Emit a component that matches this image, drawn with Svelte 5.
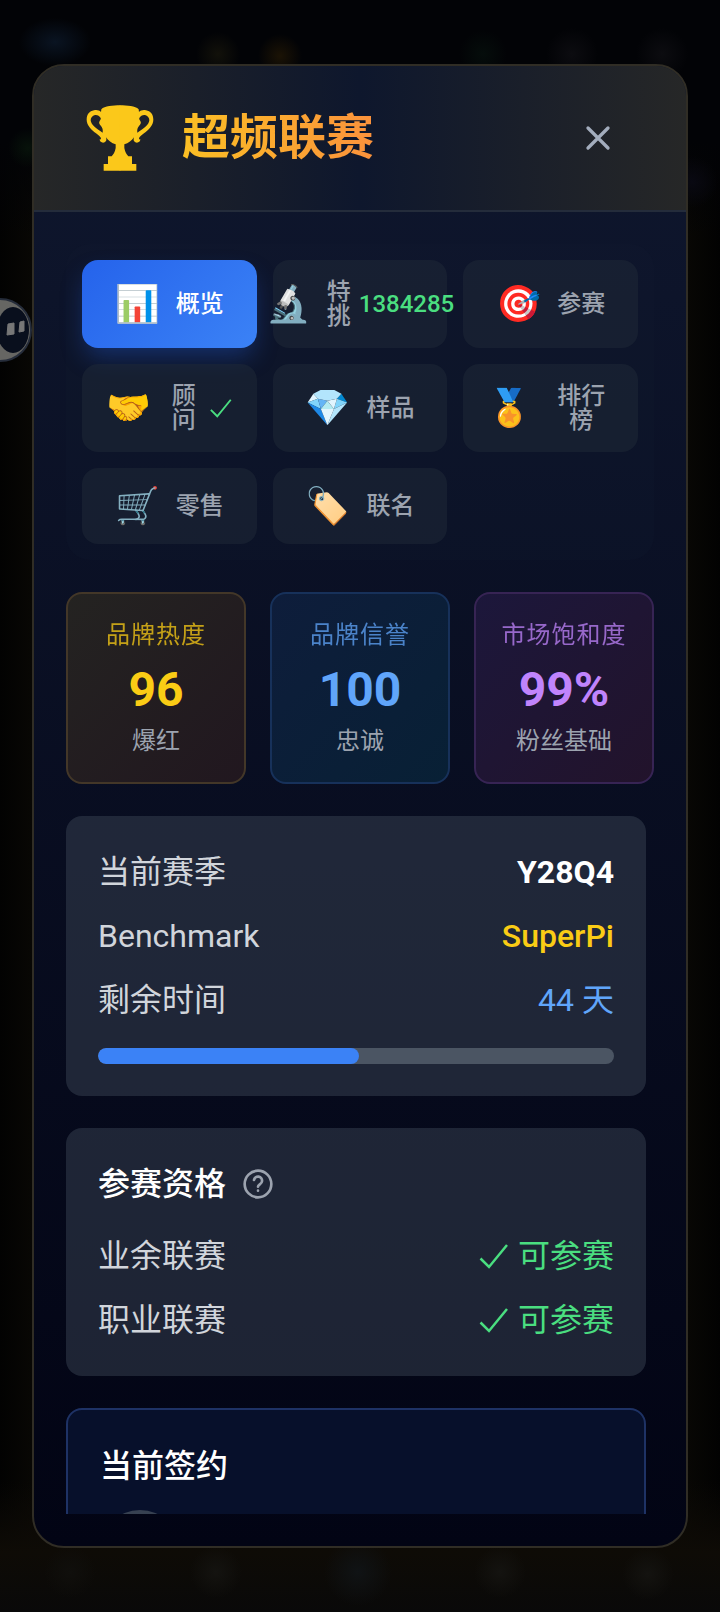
<script>
  const tabs = [
    { id: "overview", icon: "📊", label: "概览" },
    { id: "binning", icon: "🔬", label: "特挑", badge: "1384285" },
    { id: "compete", icon: "🎯", label: "参赛" },
    { id: "advisor", icon: "🤝", label: "顾问", done: true },
    { id: "samples", icon: "💎", label: "样品" },
    { id: "ranking", icon: "🏅", label: "排行榜" },
    { id: "retail", icon: "🛒", label: "零售" },
    { id: "collab", icon: "🏷️", label: "联名" },
  ];

  const stats = [
    { tone: "yellow", label: "品牌热度", value: "96", note: "爆红" },
    { tone: "blue", label: "品牌信誉", value: "100", note: "忠诚" },
    { tone: "purple", label: "市场饱和度", value: "99%", note: "粉丝基础" },
  ];

  const leagues = ["业余联赛", "职业联赛"];

  const seasonDays = 91;
  const daysLeft = 44;

  let activeTab = $state("overview");
  let progress = $derived(((seasonDays - daysLeft - 1) / seasonDays) * 100);
</script>

{#snippet check()}
  <svg class="check" viewBox="0 0 32 32" aria-hidden="true">
    <path d="M2.500 18.500l8.500 8.500L29 5" />
  </svg>
{/snippet}

{#snippet trophyHalf()}
  <path
    fill-rule="evenodd"
    d="M103 2C80 2 56 4 46 14L45 22C40 17 32 15 24 17C10 19 2 30 2 45C2 62 16 75 30 86C40 94 46 98 45 103C44 106 43 103 41 104C41 112 49 116 56 113C62 110 62 105 60 98C66 108 77 116 89 119V130C87 142 82 149 77 155H66V178H53V198H103ZM44 40C40 33 34 30 27 31C19 33 14 39 14 47C15 60 30 72 50 84C51 76 50 70 45 64C39 57 38 54 41 49C44 45 45 43 44 40Z"
  />
{/snippet}

<div class="backdrop">
  <!-- floating helper, half off screen -->
  <svg class="helper" viewBox="0 0 64 64" aria-hidden="true">
    <circle cx="32" cy="32" r="31" fill="#666663" stroke="#252c3a" stroke-width="2" />
    <ellipse cx="45" cy="32" rx="16" ry="23" fill="#090f1d" />
    <path d="M40 26l6-1v11l-7 1zM52 24l4-1v10l-5 1z" fill="#777" stroke="#777" />
  </svg>

  <div class="modal" role="dialog" aria-labelledby="title">
    <header>
      <svg class="trophy" viewBox="0 0 204 200" fill="#fbc81a" aria-hidden="true">
        {@render trophyHalf()}
        <g transform="translate(204 0) scale(-1 1)">
          {@render trophyHalf()}
        </g>
      </svg>
      <h1 id="title">超频联赛</h1>
      <button class="close" aria-label="关闭">
        <svg viewBox="0 0 24 24" aria-hidden="true">
          <path d="M6 6l12 12M18 6L6 18" />
        </svg>
      </button>
    </header>

    <div class="content">
      <nav class="tabs">
        {#each tabs as tab}
          <button
            class="tab"
            class:active={activeTab === tab.id}
            onclick={() => (activeTab = tab.id)}
          >
            <span class="tab-icon">{tab.icon}</span>
            <span class="tab-label">{tab.label}</span>
            {#if tab.badge}
              <span class="badge">{tab.badge}</span>
            {:else if tab.done}
              <span class="badge">{@render check()}</span>
            {/if}
          </button>
        {/each}
      </nav>

      <section class="stats">
        {#each stats as stat}
          <div class="stat {stat.tone}">
            <div class="stat-label">{stat.label}</div>
            <div class="stat-value">{stat.value}</div>
            <div class="stat-note">{stat.note}</div>
          </div>
        {/each}
      </section>

      <div class="panels">
        <section class="card">
          <div class="rows">
            <div class="row">
              <span>当前赛季</span>
              <span class="season">Y28Q4</span>
            </div>
            <div class="row">
              <span>Benchmark</span>
              <span class="benchmark">SuperPi</span>
            </div>
            <div class="row">
              <span>剩余时间</span>
              <span class="days">{daysLeft} 天</span>
            </div>
          </div>
          <div class="track">
            <div class="fill" style="width: {progress}%"></div>
          </div>
        </section>

        <section class="card">
          <h2>
            参赛资格
            <button class="help" aria-label="说明">
              <svg viewBox="0 0 24 24" aria-hidden="true">
                <circle cx="12" cy="12" r="10" />
                <path d="M9 9a3 3 0 0 1 6 1c0 2-3 2.500-3 4M12 17h0" />
              </svg>
            </button>
          </h2>
          <div class="rows">
            {#each leagues as league}
              <div class="row">
                <span>{league}</span>
                <span class="ok">{@render check()}可参赛</span>
              </div>
            {/each}
          </div>
        </section>

        <section class="card signed">
          <h2>当前签约</h2>
          <div class="avatar"></div>
        </section>
      </div>
    </div>
  </div>
</div>

<style>
  :global(body) {
    margin: 0;
    background: #020306;
  }

  .backdrop {
    position: relative;
    box-sizing: border-box;
    height: 100vh;
    padding: 64px 32px;
    overflow: hidden;
    font-family: Roboto, "Noto Sans CJK SC", sans-serif;
    background:
      radial-gradient(36px 24px at 55px 42px, #0a1422, transparent),
      radial-gradient(circle at 218px 54px, #12110a, transparent 22px),
      radial-gradient(circle at 280px 56px, #1b1305, transparent 22px),
      radial-gradient(circle at 483px 54px, #050d0b, transparent 24px),
      radial-gradient(circle at 572px 54px, #0c0c10, transparent 26px),
      radial-gradient(circle at 662px 54px, #0c0c10, transparent 26px),
      radial-gradient(circle at 28px 148px, #07120a, transparent 20px),
      radial-gradient(circle at 692px 182px, #090912, transparent 26px),
      radial-gradient(circle at 70px 1572px, #100f0c, transparent 26px),
      radial-gradient(circle at 216px 1572px, #141310, transparent 26px),
      radial-gradient(circle at 358px 1572px, #101315, transparent 34px),
      radial-gradient(circle at 500px 1572px, #141310, transparent 26px),
      radial-gradient(circle at 648px 1574px, #141310, transparent 26px),
      linear-gradient(180deg, #020306 0, #020306 140px, transparent 240px),
      linear-gradient(0deg, #090909 0, #0e0b06 60px, transparent 130px),
      linear-gradient(90deg, #020202, #080704 32px, #080704 688px, #020202 720px);
  }

  .helper {
    position: absolute;
    top: 298px;
    left: -32px;
    width: 64px;
    height: 64px;
  }

  .modal {
    position: relative;
    box-sizing: border-box;
    display: flex;
    flex-direction: column;
    height: 100%;
    overflow: hidden;
    border: 2px solid #302d25;
    border-radius: 32px;
    background: linear-gradient(180deg, #0f172e, #020414);
  }

  button {
    padding: 0;
    border: none;
    background: none;
    font: inherit;
    cursor: pointer;
  }

  header {
    display: flex;
    align-items: center;
    padding: 32px 48px;
    border-bottom: 2px solid #242c3b;
    background: linear-gradient(90deg, #262727, #0e172d 50%, #262727);
  }

  .trophy {
    width: 68px;
    height: 68px;
    margin: 0 28px 0 4px;
  }

  h1 {
    margin: 0;
    font-size: 48px;
    line-height: 64px;
    font-weight: 700;
    color: transparent;
    background: linear-gradient(90deg, #fbbf24, #fb923c);
    background-clip: text;
  }

  .close {
    width: 80px;
    height: 80px;
    margin-left: auto;
  }

  .close svg {
    display: block;
    width: 40px;
    height: 40px;
    margin: auto;
    stroke: #a3adbd;
    stroke-width: 2;
    stroke-linecap: round;
  }

  .content {
    flex: 1;
    min-height: 0;
    display: flex;
    flex-direction: column;
    gap: 32px;
    padding: 32px;
  }

  .tabs {
    display: grid;
    grid-template-columns: repeat(3, minmax(0, 1fr));
    gap: 16px;
    padding: 16px;
    border-radius: 24px;
    background: rgba(31, 41, 55, 0.1);
  }

  .tab {
    display: flex;
    align-items: center;
    justify-content: center;
    padding: 20px 24px;
    border-radius: 16px;
    background: rgba(31, 41, 55, 0.5);
    color: #9ca3af;
    font-size: 24px;
    line-height: 24px;
    font-weight: 500;
  }

  .tab.active {
    background: linear-gradient(135deg, #2563eb, #3b82f6);
    box-shadow: 0 12px 24px -4px rgba(37, 99, 235, 0.35);
    color: #fff;
  }

  .tab-icon {
    flex-shrink: 0;
    margin-right: 16px;
    font-size: 36px;
    line-height: 36px;
  }

  .badge {
    margin-left: 8px;
    color: #4ade80;
  }

  .check {
    display: block;
    flex-shrink: 0;
    width: 1em;
    height: 1em;
    fill: none;
    stroke: currentColor;
    stroke-width: 2.5;
  }

  .stats {
    display: grid;
    grid-template-columns: repeat(3, 1fr);
    gap: 24px;
    text-align: center;
  }

  .stat {
    padding: 24px 0;
    border: 2px solid;
    border-radius: 16px;
  }

  .stat-label,
  .stat-note {
    font-size: 24px;
    line-height: 34px;
  }

  .stat-label {
    letter-spacing: 1px;
    opacity: 0.75;
  }

  .stat-value {
    margin: 8px 0 4px;
    font-size: 48px;
    line-height: 60px;
    font-weight: 700;
  }

  .stat-note {
    color: #9ca3af;
  }

  .yellow {
    color: #facc15;
    border-color: #433728;
    background: linear-gradient(135deg, #242321, #21171f);
  }

  .blue {
    color: #60a5fa;
    border-color: #17315a;
    background: linear-gradient(135deg, #0e1d3b, #082035);
  }

  .purple {
    color: #c084fc;
    border-color: #372454;
    background: linear-gradient(135deg, #1c173b, #22132b);
  }

  .panels {
    flex: 1;
    min-height: 0;
    display: flex;
    flex-direction: column;
    gap: 32px;
    padding-right: 8px;
    overflow-y: auto;
    scrollbar-width: none;
  }

  .card {
    flex-shrink: 0;
    padding: 32px;
    border-radius: 16px;
    background: rgba(55, 65, 81, 0.5);
    color: #d1d5db;
    font-size: 32px;
    line-height: 48px;
  }

  .rows {
    display: flex;
    flex-direction: column;
    gap: 16px;
  }

  .row {
    display: flex;
    justify-content: space-between;
    height: 48px;
  }

  .season {
    color: #fff;
    font-weight: 700;
  }

  .benchmark {
    color: #facc15;
    font-weight: 500;
  }

  .days {
    color: #60a5fa;
  }

  .ok {
    display: flex;
    align-items: center;
    gap: 8px;
    color: #4ade80;
  }

  .track {
    height: 16px;
    margin-top: 24px;
    overflow: hidden;
    border-radius: 8px;
    background: #4b5563;
  }

  .fill {
    height: 100%;
    border-radius: 8px;
    background: #3b82f6;
  }

  h2 {
    display: flex;
    align-items: center;
    gap: 16px;
    height: 48px;
    margin: 0 0 24px;
    color: #fff;
    font-size: 32px;
    font-weight: 500;
  }

  .help svg {
    display: block;
    width: 32px;
    height: 32px;
    fill: none;
    stroke: #9ca3af;
    stroke-width: 2;
    stroke-linecap: round;
  }

  .signed {
    border: 2px solid #1e3265;
    background: #07102b;
  }

  .signed h2 {
    margin-bottom: 20px;
  }

  .avatar {
    width: 80px;
    height: 80px;
    border-radius: 50%;
    background: #374151;
  }
</style>
